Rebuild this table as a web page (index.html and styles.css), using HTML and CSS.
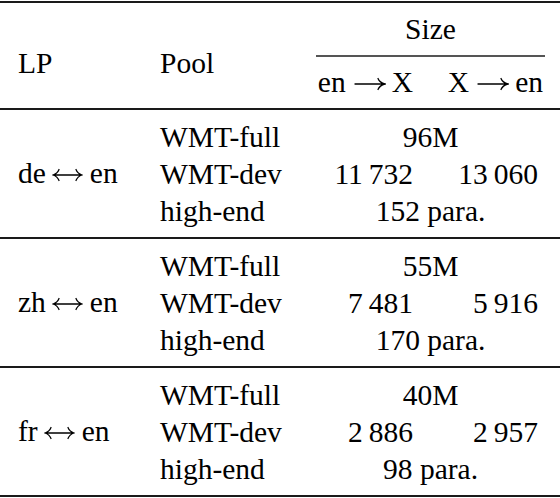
FILE: index.html
```html
<!doctype html>
<html lang="en">
    <head>
        <meta charset="UTF-8" />
        <title>Pool sizes</title>
        <link rel="stylesheet" href="styles.css">
    </head>
    <body>
        <table class="pools">
            <colgroup>
                <col class="c-lp">
                <col class="c-pool">
                <col class="c-a">
                <col class="c-b">
            </colgroup>
            <thead>
                <tr>
                    <th rowspan="2" class="lp head">LP</th>
                    <th rowspan="2" class="pool head">Pool</th>
                    <th colspan="2" class="size"><div class="size-label">Size</div></th>
                </tr>
                <tr class="dirs">
                    <th class="num">en<svg class="arrow" viewBox="0 0 32 14"><path d="M1 7H30M24 1.5Q25.5 5.5 31 7Q25.5 8.5 24 12.5"/></svg>X</th>
                    <th class="num last">X<svg class="arrow" viewBox="0 0 32 14"><path d="M1 7H30M24 1.5Q25.5 5.5 31 7Q25.5 8.5 24 12.5"/></svg>en</th>
                </tr>
            </thead>
            <tbody>
                <tr class="first">
                    <td rowspan="3" class="lp">de<svg class="both" viewBox="0 0 31 14"><path d="M2 7H29M7 1.5Q5.5 5.5 1 7Q5.5 8.5 7 12.5M24 1.5Q25.5 5.5 30 7Q25.5 8.5 24 12.5"/></svg>en</td>
                    <td class="pool">WMT-full</td>
                    <td colspan="2" class="span">96M</td>
                </tr>
                <tr>
                    <td class="pool">WMT-dev</td>
                    <td class="num">11&thinsp;732</td>
                    <td class="num last">13&thinsp;060</td>
                </tr>
                <tr class="end">
                    <td class="pool">high-end</td>
                    <td colspan="2" class="span">152 para.</td>
                </tr>
            </tbody>
            <tbody>
                <tr class="first">
                    <td rowspan="3" class="lp">zh<svg class="both" viewBox="0 0 31 14"><path d="M2 7H29M7 1.5Q5.5 5.5 1 7Q5.5 8.5 7 12.5M24 1.5Q25.5 5.5 30 7Q25.5 8.5 24 12.5"/></svg>en</td>
                    <td class="pool">WMT-full</td>
                    <td colspan="2" class="span">55M</td>
                </tr>
                <tr>
                    <td class="pool">WMT-dev</td>
                    <td class="num">7&thinsp;481</td>
                    <td class="num last">5&thinsp;916</td>
                </tr>
                <tr class="end">
                    <td class="pool">high-end</td>
                    <td colspan="2" class="span">170 para.</td>
                </tr>
            </tbody>
            <tbody>
                <tr class="first">
                    <td rowspan="3" class="lp">fr<svg class="both" viewBox="0 0 31 14"><path d="M2 7H29M7 1.5Q5.5 5.5 1 7Q5.5 8.5 7 12.5M24 1.5Q25.5 5.5 30 7Q25.5 8.5 24 12.5"/></svg>en</td>
                    <td class="pool">WMT-full</td>
                    <td colspan="2" class="span">40M</td>
                </tr>
                <tr>
                    <td class="pool">WMT-dev</td>
                    <td class="num">2&thinsp;886</td>
                    <td class="num last">2&thinsp;957</td>
                </tr>
                <tr class="end">
                    <td class="pool">high-end</td>
                    <td colspan="2" class="span">98 para.</td>
                </tr>
            </tbody>
        </table>
    </body>
</html>
```

FILE: styles.css
```css
html,
body {
    margin: 0;
    padding: 0;
    background: #fff;
}

.pools {
    margin-top: 1px;
    width: 560px;
    table-layout: fixed;
    border-collapse: collapse;
    border-top: 2px solid #1a1a1a;
    border-bottom: 2px solid #1a1a1a;
}

.pools th,
.pools td {
    padding: 0;
    font-family: "Liberation Serif", "Times New Roman", serif;
    font-size: 29.5px;
    font-weight: normal;
    color: #000;
    white-space: nowrap;
    box-sizing: border-box;
}

.c-lp { width: 142px; }
.c-pool { width: 158px; }
.c-a { width: 131px; }
.c-b { width: 129px; }

.pools tbody {
    border-top: 2px solid #1a1a1a;
}

/* arrows */
.arrow,
.both {
    height: 14px;
    vertical-align: 1px;
    fill: none;
    stroke: #000;
    stroke-width: 1.3;
    stroke-linecap: round;
}

.arrow {
    width: 32px;
    margin: 0 6px 0 8px;
}

.both {
    width: 31px;
    margin: 0 7px 0 6px;
}

/* header */
.pools th {
    vertical-align: middle;
}

.head {
    padding-top: 16px !important;
}

.size {
    padding: 0 15px 0 16px !important;
}

.size-label {
    line-height: 52px;
    text-align: center;
    border-bottom: 2px solid #555;
}

.dirs th {
    line-height: 51px;
}

/* cells */
.lp {
    text-align: left;
    padding-left: 18px !important;
    vertical-align: middle;
}

.pool {
    text-align: left;
    padding-left: 18px !important;
}

.pools td {
    line-height: 37px;
}

.num {
    text-align: right;
    padding-right: 18px !important;
}

th.num.last {
    padding-right: 17px !important;
}

td.num.last {
    padding-right: 22px !important;
}

.span {
    text-align: center;
    padding: 0 17px 0 18px !important;
}

.first td {
    padding-top: 9px !important;
}

.first td.lp {
    padding-top: 0 !important;
}

.end td {
    padding-bottom: 7px !important;
}
```
